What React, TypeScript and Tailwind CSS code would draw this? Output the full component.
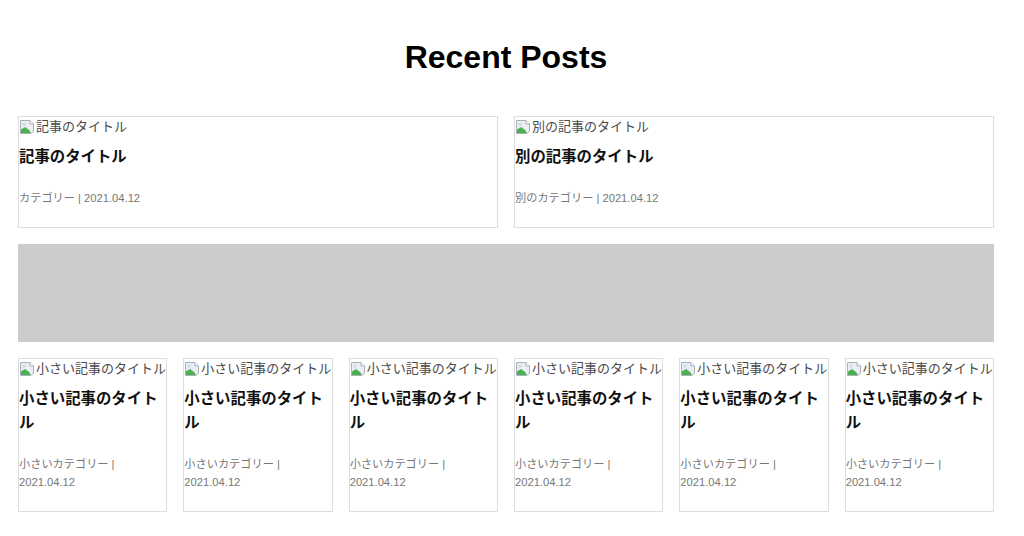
import React from 'react';

type Post = {
    title: string;
    category: string;
    date: string;
};

const bigPosts: Post[] = [
    { title: '記事のタイトル', category: 'カテゴリー', date: '2021.04.12' },
    { title: '別の記事のタイトル', category: '別のカテゴリー', date: '2021.04.12' },
];

const smallPosts: Post[] = Array.from({ length: 6 }, () => ({
    title: '小さい記事のタイトル',
    category: '小さいカテゴリー',
    date: '2021.04.12',
}));

// Chrome's broken-image glyph, drawn by hand
const BrokenImage: React.FC = () => (
    <svg width="16" height="16" viewBox="0 0 16 16" className="shrink-0">
        <path d="M1.5 1.5 H11 L14.5 5 V12 L12 14.5 H1.5 Z" fill="#e8eef3" stroke="#a9b1b8" />
        <path d="M11 1.5 V5 H14.5" fill="#fff" stroke="#a9b1b8" />
        <path d="M2 14 L2 10.5 L6 8 L10 11 L12 14 Z" fill="#4caf50" />
        <circle cx="5" cy="5" r="1.5" fill="#cfd8dc" />
    </svg>
);

const ImageAlt: React.FC<{ alt: string }> = ({ alt }) => (
    <div className="h-[20px] flex items-center gap-[1px] text-[13px] text-[#4a4a4a] whitespace-nowrap overflow-hidden">
        <BrokenImage />
        <span>{alt}</span>
    </div>
);

const PostCard: React.FC<{ post: Post }> = ({ post }) => (
    <div className="border border-[#dddddd] bg-white min-w-0">
        <ImageAlt alt={post.title} />
        <h3 className="mt-[8px] mb-[20px] text-[15.4px] leading-[1.6] font-bold text-[#111]">{post.title}</h3>
        <p className="pb-[19px] text-[11.2px] leading-[1.6] text-[#777]">
            {post.category} | {post.date}
        </p>
    </div>
);

const App: React.FC = () => {
    return (
        <div className="min-h-screen bg-white" style={{ fontFamily: '"Liberation Sans", "Noto Sans CJK JP", sans-serif' }}>
            <div className="ml-[18px] w-[976px] pt-[38px]">
                <h2 className="text-center text-[32px] leading-[38px] font-bold text-black mb-[40px]">Recent Posts</h2>
                <div className="flex flex-col gap-[16px]">
                    <div className="grid grid-cols-2 gap-[16px]">
                        {bigPosts.map((post, i) => (
                            <PostCard key={i} post={post} />
                        ))}
                    </div>
                    <div className="h-[98px] bg-[#cccccc]" />
                    <div className="grid grid-cols-6 gap-[16px]">
                        {smallPosts.map((post, i) => (
                            <PostCard key={i} post={post} />
                        ))}
                    </div>
                </div>
            </div>
        </div>
    );
};

export default App;
